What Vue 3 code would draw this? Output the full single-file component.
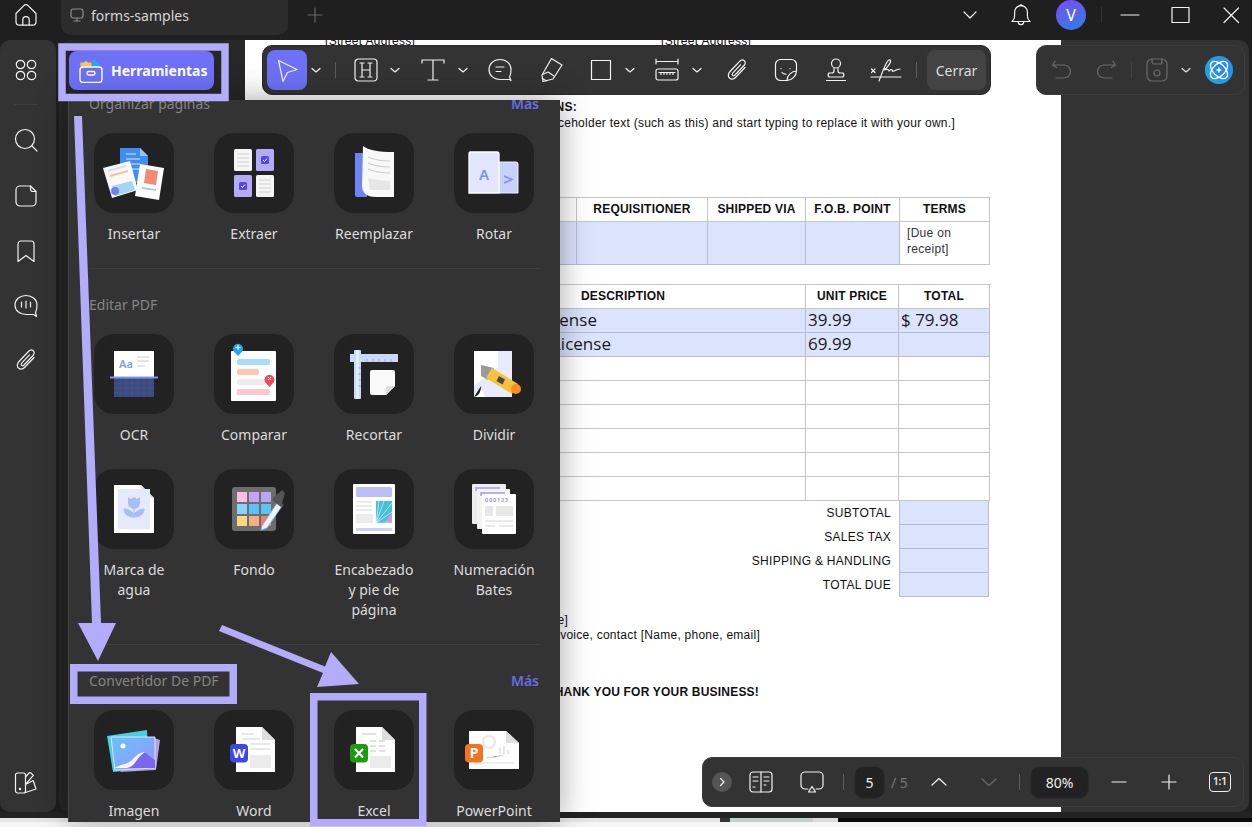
<script setup>
const firstRows = [1, 2, 3, 4, 5, 6]
const totals = ['SUBTOTAL', 'SALES TAX', 'SHIPPING & HANDLING', 'TOTAL DUE']
</script>

<template>
  <div class="app">
    <header class="titlebar">
      <svg class="ic home" viewBox="0 0 24 24"><path d="M2 10.500 9.600 2.800a3.400 3.400 0 0 1 4.800 0L22 10.500v8.300a3.400 3.400 0 0 1-3.400 3.400H5.400A3.400 3.400 0 0 1 2 18.800z" /><path d="M8.800 22v-5.200a3.200 3.200 0 0 1 6.400 0V22" /></svg>
      <div class="tab">
        <svg class="ic dim" viewBox="0 0 14 14"><rect x="1" y="1" width="12" height="9" rx="2.200" /><path d="M7 10v3M4 13h6" /></svg>
        <span>forms-samples</span>
      </div>
      <svg class="ic plus" viewBox="0 0 16 16"><path d="M8 1v14M1 8h14" /></svg>
      <svg class="ic win right-start" viewBox="0 0 20 20"><path d="M4 7l6 6 6-6" /></svg>
      <svg class="ic bell ml29" viewBox="0 0 24 24"><path d="M3 19.500c2-1.500 2.600-3 2.600-5.500V10a6.400 6.400 0 0 1 12.800 0v4c0 2.500.6 4 2.600 5.500z" /><path d="M10.800 3.700a1.300 1.300 0 0 1 2.400 0M9.300 20a2.700 2.700 0 0 0 5.400 0" /></svg>
      <div class="avatar ml23">V</div>
      <span class="vsep tall ml15"></span>
      <svg class="ic win ml18" viewBox="0 0 20 20"><path d="M1 10h18" /></svg>
      <svg class="ic win ml30" viewBox="0 0 20 20"><rect x="2" y="2.500" width="17" height="15" /></svg>
      <svg class="ic win ml31" viewBox="0 0 20 20"><path d="M3 3l14.500 14.500M17.500 3 3 17.500" /></svg>
    </header>

    <div class="workspace">
      <nav class="rail">
        <svg class="ic rail-ic" viewBox="0 0 24 24"><circle cx="6.500" cy="6.500" r="4.200" /><circle cx="17.500" cy="6.500" r="4.200" /><circle cx="6.500" cy="17.500" r="4.200" /><circle cx="17.500" cy="17.500" r="4.200" /></svg>
        <span class="rail-sep"></span>
        <svg class="ic rail-ic" viewBox="0 0 24 24"><circle cx="11" cy="11" r="9.500" /><path d="M18 18l5 5" /></svg>
        <svg class="ic rail-ic gap32" viewBox="0 0 24 24"><path d="M6 2h10.500L22 7.500V18a4 4 0 0 1-4 4H6a4 4 0 0 1-4-4V6a4 4 0 0 1 4-4z" /><path d="M16.500 2v3a2.500 2.500 0 0 0 2.500 2.500h3" /></svg>
        <svg class="ic rail-ic gap31" viewBox="0 0 24 24"><path d="M4 5a3 3 0 0 1 3-3h10a3 3 0 0 1 3 3v17.500l-8-6-8 6z" /></svg>
        <svg class="ic rail-ic gap31" viewBox="0 0 24 24"><path d="M12 1.500C5.600 1.500 1 5.500 1 11s4.600 9.500 11 9.500h7.500l3 2-1-4c1-1.800 1.500-4.500 1.500-7.500 0-5.500-4.600-9.500-11-9.500z" /><path d="M7.500 8v5M12 7v7M16.500 8v5" /></svg>
        <svg class="ic rail-ic gap30" viewBox="0 0 24 24"><path d="M20 9.500 11 19c-2 2.200-4.700 2.500-6.500 1s-1.500-4.300.5-6.500L14.500 3.500c1.500-1.600 3.500-1.800 4.800-.7s1.200 3.100-.3 4.700l-9 9.500c-.8.900-1.900 1-2.500.4s-.4-1.600.4-2.500l7.600-8" /></svg>
        <svg class="ic rail-ic rail-bottom" viewBox="0 0 24 24"><path d="M3.500 3h6a2 2 0 0 1 2 2v16a2 2 0 0 1-2 2h-6a2 2 0 0 1-2-2V5a2 2 0 0 1 2-2z" /><path d="M11.500 7l3-3.500a2 2 0 0 1 2.800-.2l2 2-7.800 9M11.500 22.500l10.500-3.500-2.800-8.500-7.700 4" /><circle cx="6" cy="19" r=".6" /></svg>
      </nav>

      <div class="gutter">
        <button class="tools-btn">
          <svg class="tools-ic" viewBox="0 0 24 24">
            <path d="M1.500 3.500h4l1-2 2.500 2h3.500v4h-11z" fill="#f7c948" />
            <path d="M13 5l4-2 4 3v2h-8z" fill="#2aa4f4" />
            <circle cx="15.500" cy="1.500" r="1.500" fill="#1fbf9c" />
            <rect x="1" y="8" width="22" height="15.500" rx="3" fill="#6e71f7" stroke="#fff" stroke-width="1.400" />
            <rect x="8" y="12.500" width="8" height="3.500" rx="1.700" fill="none" stroke="#fff" stroke-width="1.300" />
          </svg>
          <span>Herramientas</span>
        </button>
      </div>

      <main class="viewer">
        <div class="page">
          <div class="addr"><span>[Street Address]</span><span>[Street Address]</span></div>
          <p class="line bold w-ns">SPECIAL INSTRUCTIONS:</p>
          <p class="line w-ph">[Click a placeholder text (such as this) and start typing to replace it with your own.]</p>

          <div class="grid t1">
            <div class="th">SHIP DATE</div><div class="th">REQUISITIONER</div><div class="th">SHIPPED VIA</div><div class="th">F.O.B. POINT</div><div class="th">TERMS</div>
            <div class="fill"></div><div class="fill"></div><div class="fill"></div><div class="fill"></div><div class="td small">[Due on<br />receipt]</div>
          </div>

          <div class="grid t2">
            <div class="th desc">DESCRIPTION</div><div class="th">UNIT PRICE</div><div class="th">TOTAL</div>
            <div class="fill big lic-a">License</div><div class="fill big">39.99</div><div class="fill big">$ 79.98</div>
            <div class="fill big lic-b">License</div><div class="fill big">69.99</div><div class="fill big"></div>
            <template v-for="row in firstRows" :key="row">
              <div class="td"></div><div class="td"></div><div class="td"></div>
            </template>
          </div>

          <div v-for="label in totals" :key="label" class="total-row">
            <span>{{ label }}</span>
            <div class="total-cell"></div>
          </div>

          <p class="line w-e1">Make all checks payable to [Your Company Name]</p>
          <p class="line w-e2">If you have any questions about this invoice, contact [Name, phone, email]</p>
          <p class="line bold w-thanks">THANK YOU FOR YOUR BUSINESS!</p>
        </div>
        <div class="dark-side"></div>
      </main>

      <div class="annot-bar">
        <button class="cursor-btn">
          <svg class="ic" viewBox="0 0 24 24"><path d="M3.500 2.500 22 11.500l-9.500 3L8 23.500z" /></svg>
        </button>
        <svg class="ic chev ml3" viewBox="0 0 12 12"><path d="M2 4.500l4 3.500 4-3.500" /></svg>
        <span class="vsep ml13"></span>
        <svg class="ic tool ml18" viewBox="0 0 24 24"><rect x="1" y="1" width="22" height="22" rx="3.500" /><path d="M6 5h4M14 5h4M8 5v14M16 5v14M6 19h4M14 19h4M8 12h8" /></svg>
        <svg class="ic chev ml11" viewBox="0 0 12 12"><path d="M2 4.500l4 3.500 4-3.500" /></svg>
        <svg class="ic tool ml20" viewBox="0 0 24 24"><path d="M1 5V2h22v3M12 2v20M7 22h10" /></svg>
        <svg class="ic chev ml12" viewBox="0 0 12 12"><path d="M2 4.500l4 3.500 4-3.500" /></svg>
        <svg class="ic tool ml19" viewBox="0 0 24 24"><path d="M12 1.500C5.600 1.500 1 5.800 1 11.500s4.600 10 11 10h9.500l1.500 1-1.500-3.500c1-1.800 1.500-4.500 1.500-7.500 0-5.700-4.600-10-11-10z" /><path d="M8 9h8M8 13.500h5" /></svg>
        <svg class="ic tool ml28" viewBox="0 0 24 24"><path d="M11.500.5 22 7 13 21l-10 2.500L2 17z" /><path d="M2.500 16.500 8 14l6 4M2.300 20.500l4 2.300" /></svg>
        <svg class="ic tool ml25" viewBox="0 0 24 24"><rect x="2.500" y="2.500" width="19" height="19" /></svg>
        <svg class="ic chev ml11" viewBox="0 0 12 12"><path d="M2 4.500l4 3.500 4-3.500" /></svg>
        <svg class="ic tool ml19" viewBox="0 0 24 24"><path d="M1 1v5M23 1v5M1 3.500h22" /><rect x="1" y="11" width="22" height="11" rx="2" /><path d="M4 14.500h16M6 14.500v2M9 14.500v2M12 14.500v2M15 14.500v2M18 14.500v2" /></svg>
        <svg class="ic chev ml12" viewBox="0 0 12 12"><path d="M2 4.500l4 3.500 4-3.500" /></svg>
        <svg class="ic tool ml22" viewBox="0 0 24 24"><path d="M20 9.500 11 19c-2 2.200-4.700 2.500-6.500 1s-1.500-4.300.5-6.500L14.500 3.500c1.500-1.600 3.500-1.800 4.800-.7s1.200 3.100-.3 4.700l-9 9.500c-.8.900-1.900 1-2.500.4s-.4-1.600.4-2.500l7.600-8" /></svg>
        <svg class="ic tool ml25" viewBox="0 0 24 24"><path d="M6.500 1.500h11a5 5 0 0 1 5 5V13c-5 0-9.500 4.500-9.500 9.500H6.500a5 5 0 0 1-5-5v-11a5 5 0 0 1 5-5z" /><path d="M7 10.500v.2M16 10.500v.2M8 14.500c1 1.300 2.500 1.800 4 1.500M13 22.500c4.500 0 9.500-4.500 9.500-9.500" /></svg>
        <svg class="ic tool ml26" viewBox="0 0 24 24"><circle cx="12" cy="5.500" r="4.500" /><path d="M10 10v3c0 1.500-1 2-2.500 2H5a3 3 0 0 0 0 4h14a3 3 0 0 0 0-4h-2.500C15 15 14 14.500 14 13v-3" /><path d="M2.500 22.500h19" /></svg>
        <svg class="ic sign ml22" viewBox="0 0 32 24"><path d="M1 19h30" /><path d="M1.500 11l3.500 3.500M5 11l-3.500 3.500" /><path d="M9 23c2-5 5-14 8-19 1-2 3-3 3.500-1.500S18 10 13 12c3-1 6-1 6 1 1-1 2-2 3-1s0 2 2 1 4-2 6-2" /></svg>
        <span class="vsep ml14"></span>
        <button class="close-btn ml10">Cerrar</button>
      </div>

      <div class="file-bar">
        <svg class="ic tool off" viewBox="0 0 24 24"><path d="M5 3 2.500 7 6.500 9.500M3 7h11a6.500 6.500 0 0 1 0 13H6" /></svg>
        <svg class="ic tool off ml20" viewBox="0 0 24 24"><path d="M19 3l2.500 4-4 2.500M21 7H10a6.500 6.500 0 0 0 0 13h8" /></svg>
        <span class="vsep faint ml13"></span>
        <svg class="ic tool off ml13" viewBox="0 0 24 24"><rect x="2" y="1" width="20" height="22" rx="5" /><path d="M7 1v3a2 2 0 0 0 2 2h6a2 2 0 0 0 2-2V1" /><circle cx="12" cy="15" r="3" /></svg>
        <svg class="ic chev ml11" viewBox="0 0 12 12"><path d="M2 4.500l4 3.500 4-3.500" /></svg>
        <div class="ai ml13">
          <svg viewBox="0 0 28 28"><g fill="none" stroke="#fff" stroke-width="1.300"><ellipse cx="14" cy="14" rx="10.500" ry="6" transform="rotate(45 14 14)" /><ellipse cx="14" cy="14" rx="10.500" ry="6" transform="rotate(-45 14 14)" /></g><path d="M14 11.500v5M11.500 14h5" stroke="#fff" stroke-width="1.600" /></svg>
        </div>
      </div>

      <div class="page-bar">
        <span class="round-btn"><svg class="ic" viewBox="0 0 12 12"><path d="M4.500 2.500 8 6l-3.500 3.500" /></svg></span>
        <svg class="ic tool ml17" viewBox="0 0 24 24"><rect x="1" y="2" width="22" height="20" rx="3" /><path d="M12 2v20M4 7h5M4 11h5M4 17h2M15 7h5M15 11h5M15 15h2" /></svg>
        <svg class="ic tool ml27" viewBox="0 0 24 24"><path d="M8 19H5a4 4 0 0 1-4-4V6a4 4 0 0 1 4-4h14a4 4 0 0 1 4 4v9a4 4 0 0 1-4 4h-3" /><path d="M12 16.500 15.500 22h-7z" /></svg>
        <span class="vsep ml19"></span>
        <span class="num-box page-num ml10">5</span>
        <span class="of ml6">/ 5</span>
        <svg class="ic arrow ml20" viewBox="0 0 20 20"><path d="M3 13l7-6.500 7 6.500" /></svg>
        <svg class="ic arrow off ml30" viewBox="0 0 20 20"><path d="M3 7l7 6.500L17 7" /></svg>
        <span class="vsep ml20"></span>
        <span class="num-box zoom-num ml10">80%</span>
        <svg class="ic arrow ml20" viewBox="0 0 20 20"><path d="M3 10h14" /></svg>
        <svg class="ic arrow ml30" viewBox="0 0 20 20"><path d="M3 10h14M10 3v14" /></svg>
        <span class="actual ml30">1:1</span>
      </div>
    </div>

    <div class="foot-dark"></div>
    <div class="thumbs">
      <span class="th-a"></span><span class="th-b"></span><span class="th-c"></span><span class="th-d"></span>
    </div>
    <div class="foot-light"></div>

    <aside class="panel">
      <section class="section first">
        <div class="sec-head"><span>Organizar páginas</span><a>Más</a></div>
        <div class="tiles">
          <div class="tile">
            <div class="tile-ic"><svg viewBox="0 0 80 80">
              <path d="M26 15h20l8 8v27H26z" fill="#3f8cf5" /><path d="M46 15l8 8h-8z" fill="#9cc4fb" />
              <path d="M32 21h10M32 26h14M32 31h14M32 36h14" stroke="#a9ccfa" stroke-width="1.500" />
              <path d="M46 31l24 4-5 32-24-4z" fill="#fff" /><path d="M52 36l12 2-2 14-12-2z" fill="#f58a73" /><path d="M48 55l14 2" stroke="#a5d3ee" stroke-width="2" />
              <path d="M9 35l27-7 8 29-26 8z" fill="#f8f8f6" /><path d="M14 38l18-5" stroke="#cfe4ef" stroke-width="2" /><path d="M16 43l18-5" stroke="#f6c49b" stroke-width="2" />
              <path d="M18 53l20-5 3 9-20 6z" fill="#a4d4f6" /><circle cx="21" cy="58" r="4" fill="#6f81ea" />
            </svg></div>
            <span class="name">Insertar</span>
          </div>
          <div class="tile">
            <div class="tile-ic"><svg viewBox="0 0 80 80">
              <rect x="20" y="16" width="18" height="22" rx="1.500" fill="#f5f5f5" /><path d="M23 21h12M23 25h12M23 29h12M23 33h12" stroke="#ddd" stroke-width="1.300" />
              <rect x="42" y="16" width="18" height="22" rx="1.500" fill="#b5acf9" /><rect x="47" y="23" width="8" height="8" rx="1.500" fill="#5a45e6" /><path d="M49 27l1.500 1.500 2.500-3" stroke="#fff" fill="none" />
              <rect x="20" y="42" width="18" height="22" rx="1.500" fill="#b5acf9" /><rect x="25" y="49" width="8" height="8" rx="1.500" fill="#5a45e6" /><path d="M27 53l1.500 1.500 2.500-3" stroke="#fff" fill="none" />
              <rect x="42" y="42" width="18" height="22" rx="1.500" fill="#f5f5f5" /><path d="M45 47h12M45 51h12M45 55h12M45 59h12" stroke="#ddd" stroke-width="1.300" />
            </svg></div>
            <span class="name">Extraer</span>
          </div>
          <div class="tile">
            <div class="tile-ic"><svg viewBox="0 0 80 80">
              <path d="M21 20h12v44H23a2 2 0 0 1-2-2z" fill="#6f83f2" />
              <path d="M29 13c6 4 14 6 31 6v45H42c-8 0-13-3-14-10z" fill="#f8f8f8" />
              <path d="M34 24c7 3 13 4 22 4M34 30c7 3 13 4 22 4M34 36c7 3 13 4 22 4" stroke="#ccc" stroke-width="1.200" fill="none" />
              <path d="M34 45c7 2 13 2 22 3v9H36z" fill="#e6e6e6" />
            </svg></div>
            <span class="name">Reemplazar</span>
          </div>
          <div class="tile">
            <div class="tile-ic"><svg viewBox="0 0 80 80">
              <path d="M45 29h17a2 2 0 0 1 2 2v29H45z" fill="#c7d1fb" stroke="#eef" />
              <path d="M16 19h27a2 2 0 0 1 2 2v39H15V20z" fill="#e2e7fd" stroke="#fff" stroke-width="1.300" />
              <text x="30" y="47" class="art" font-size="15" fill="#7d90f0" text-anchor="middle">A</text>
              <path d="M50 43l8 3.500-8 3.500" stroke="#7d90f0" stroke-width="1.500" fill="none" />
            </svg></div>
            <span class="name">Rotar</span>
          </div>
        </div>
      </section>

      <section class="section">
        <div class="sec-head"><span>Editar PDF</span></div>
        <div class="tiles">
          <div class="tile">
            <div class="tile-ic"><svg viewBox="0 0 80 80">
              <rect x="20" y="17" width="40" height="26" fill="#fff" />
              <text x="32" y="34" class="art" font-size="11" fill="#80a0ee" text-anchor="middle">Aa</text>
              <path d="M43 23h12M43 27h12M43 32h8" stroke="#ddd" stroke-width="1.300" />
              <rect x="20" y="44" width="40" height="19" fill="#3b4b7f" />
              <path d="M20 49h40M20 54h40M20 59h40M26 44v19M32 44v19M38 44v19M44 44v19M50 44v19M56 44v19" stroke="#4b5c92" stroke-width=".6" />
              <rect x="16" y="42.500" width="48" height="2" fill="#7f98ee" />
            </svg></div>
            <span class="name">OCR</span>
          </div>
          <div class="tile">
            <div class="tile-ic"><svg viewBox="0 0 80 80">
              <rect x="17" y="17" width="45" height="50" rx="1" fill="#fff" />
              <rect x="23" y="25" width="33" height="6" rx="2" fill="#a8dcfb" /><rect x="23" y="35" width="22" height="6" rx="2" fill="#fbc9ae" /><rect x="23" y="45" width="28" height="6" rx="2" fill="#ececec" /><rect x="23" y="55" width="33" height="6" rx="2" fill="#fbc6d0" />
              <path d="M19.500 17a5 5 0 1 1 9 0l-4.500 5z" fill="#1ea7ea" /><path d="M24 11v5M21.500 13.500h5" stroke="#fff" />
              <path d="M51 48a5 5 0 1 1 9 0l-4.500 5z" fill="#ef4b5c" /><path d="M54 43l3 3M57 43l-3 3" stroke="#fff" />
            </svg></div>
            <span class="name">Comparar</span>
          </div>
          <div class="tile">
            <div class="tile-ic"><svg viewBox="0 0 80 80">
              <rect x="20" y="16" width="7" height="49" rx="1" fill="#c9d9f8" /><rect x="16" y="20" width="48" height="8" fill="#c9d9f8" />
              <rect x="22" y="16" width="3" height="49" fill="#e4ecfc" />
              <path d="M33 25v3M39 25v3M45 25v3M51 25v3M57 25v3M24 34h3M24 40h3M24 46h3M24 52h3" stroke="#8aa4d8" stroke-width=".8" />
              <path d="M38 36h21a2 2 0 0 1 2 2v14l-9 9H38a2 2 0 0 1-2-2V38a2 2 0 0 1 2-2z" fill="#fafafa" /><path d="M61 52h-7a2 2 0 0 0-2 2v7z" fill="#ddd" />
            </svg></div>
            <span class="name">Recortar</span>
          </div>
          <div class="tile">
            <div class="tile-ic"><svg viewBox="0 0 80 80">
              <path d="M20 17h38v46H30l-3-11-7 11z" fill="#e8ebfb" /><path d="M20 17h24v16L27 46l-7 6z" fill="#fff" />
              <path d="M20 63c4-1 7-4 7-11l4 11z" fill="#fff" />
              <path d="M27 31l13 3-6 12-7-4z" fill="#9a9a9a" />
              <path d="M38 34l26 16-6 10-26-16z" fill="#f5c23d" />
              <circle cx="62" cy="55" r="5" fill="#f78e1e" />
              <path d="M45 42l6 3.500-2.500 5-6-3.500z" fill="#4a4a4a" />
            </svg></div>
            <span class="name">Dividir</span>
          </div>

          <div class="tile">
            <div class="tile-ic"><svg viewBox="0 0 80 80">
              <path d="M20 16h27l13 13v35H20z" fill="#fff" /><path d="M47 16l13 13H47z" fill="#e2e2e2" />
              <rect x="24" y="20" width="32" height="40" fill="#e5e9fc" />
              <path d="M34 28l3 2 3-2 3 2 3-2v6a6 6 0 0 1-12 0z" fill="#a6bef8" /><path d="M40 40v8M30 40c0 5 4 8 10 8 6 0 10-3 10-8-4 0-7 2-10 5-3-3-6-5-10-5z" fill="#a6bef8" stroke="#a6bef8" />
            </svg></div>
            <span class="name">Marca de agua</span>
          </div>
          <div class="tile">
            <div class="tile-ic"><svg viewBox="0 0 80 80">
              <rect x="18" y="18" width="44" height="44" rx="3" fill="#6d6d6d" />
              <rect x="23" y="23" width="10" height="10" fill="#f7c0e2" /><rect x="35" y="23" width="10" height="10" fill="#c5a4f8" /><rect x="47" y="23" width="10" height="10" fill="#b7a8f4" />
              <rect x="23" y="35" width="10" height="10" fill="#88d2fb" /><rect x="35" y="35" width="10" height="10" fill="#5cc1f8" /><rect x="47" y="35" width="10" height="10" fill="#58c6ef" />
              <rect x="23" y="47" width="10" height="10" fill="#fbd780" /><rect x="35" y="47" width="10" height="10" fill="#f9ae82" /><rect x="47" y="47" width="10" height="10" fill="#ee7e66" />
              <path d="M48 57l15-23 5 3-15 22-6 2z" fill="#eef3ff" stroke="#8ab4f5" />
              <path d="M60 28l8-7 3 3-3 10 2 2-3 2-9-7z" fill="#555" />
            </svg></div>
            <span class="name">Fondo</span>
          </div>
          <div class="tile">
            <div class="tile-ic"><svg viewBox="0 0 80 80">
              <rect x="19" y="15" width="42" height="50" rx="1" fill="#fff" />
              <rect x="22" y="18" width="36" height="10" rx="1.500" fill="#bdbdf8" />
              <path d="M22 33h16M22 37h16M22 41h16" stroke="#e3e3e3" stroke-width="1.600" />
              <rect x="22" y="45" width="17" height="9" fill="#ebebeb" />
              <rect x="42" y="32" width="16" height="22" fill="#47bfd8" /><path d="M50 54 58 44v10z" fill="#c5a0e8" />
              <path d="M42 54l3-22M42 54l8-22M42 54l16-20M42 54l16-11M42 54h16" stroke="#d9f6fb" stroke-width=".7" />
              <rect x="22" y="59" width="36" height="3" fill="#cfcff8" />
            </svg></div>
            <span class="name">Encabezado y pie de página</span>
          </div>
          <div class="tile">
            <div class="tile-ic"><svg viewBox="0 0 80 80">
              <rect x="18" y="15" width="34" height="40" rx="1" fill="#ededed" /><rect x="21" y="18" width="25" height="4" fill="#b6aef8" />
              <rect x="23" y="20" width="33" height="40" rx="1" fill="#f3f3f3" /><rect x="26" y="23" width="25" height="4" fill="#b6aef8" />
              <rect x="28" y="25" width="34" height="40" rx="1" fill="#fff" />
              <text x="31" y="33" class="art" font-size="5.500" fill="#8f84ee" textLength="23">000123</text>
              <rect x="31" y="37" width="8" height="10" fill="#e8e8e8" /><rect x="42" y="37" width="17" height="10" fill="#e8e8e8" />
              <path d="M31 52h28M31 57h10M45 57h14" stroke="#e3e3e3" stroke-width="1.500" />
            </svg></div>
            <span class="name">Numeración Bates</span>
          </div>
        </div>
      </section>

      <section class="section last">
        <div class="sec-head"><span>Convertidor De PDF</span><a>Más</a></div>
        <div class="tiles">
          <div class="tile">
            <div class="tile-ic"><svg viewBox="0 0 80 80">
              <path d="M13 26l40-6 2 38-36 4z" fill="#46d0e0" />
              <path d="M60 28l6 2-4 30-36 2z" fill="#b59fe8" />
              <defs><linearGradient id="imgfill" x1="0" y1="0" x2="1" y2="1"><stop offset="0" stop-color="#68c2fb" /><stop offset="1" stop-color="#9a94f8" /></linearGradient></defs>
              <path d="M17 27h44v31l-40 2z" fill="url(#imgfill)" stroke="#d9e3ff" stroke-width="1" />
              <circle cx="29" cy="36" r="2.500" fill="#fff" />
              <path d="M20 58c8-4 12-3 18-8 5-6 10-8 13-8l10 8v8z" fill="#fff" opacity=".9" />
              <path d="M33 58c8-1 9-10 18-16l10 8v8z" fill="#7a66f0" />
            </svg></div>
            <span class="name">Imagen</span>
          </div>
          <div class="tile">
            <div class="tile-ic"><svg viewBox="0 0 80 80">
              <path d="M22 17h26l13 13v32H22z" fill="#fff" /><path d="M48 17l13 13H48z" fill="#dedede" />
              <path d="M28 24h12M28 29h18M36 34h20M36 39h20" stroke="#e2e2e2" stroke-width="1.500" /><rect x="36" y="45" width="21" height="13" fill="#ececec" />
              <rect x="16" y="34" width="18" height="18.500" rx="4" fill="#3d47e8" />
              <text x="25" y="48" class="art badge" font-size="13" text-anchor="middle">W</text>
            </svg></div>
            <span class="name">Word</span>
          </div>
          <div class="tile">
            <div class="tile-ic"><svg viewBox="0 0 80 80">
              <path d="M22 17h26l13 13v32H22z" fill="#fff" /><path d="M48 17l13 13H48z" fill="#dedede" />
              <path d="M28 24h14M36 31h6M45 31h6M36 36h6M45 36h6M36 41h6M45 41h6" stroke="#e2e2e2" stroke-width="2" /><rect x="36" y="46" width="21" height="12" fill="#ececec" />
              <rect x="16" y="34" width="18" height="18.500" rx="4" fill="#1f9a0f" />
              <path d="M21 39l8 8.500M29 39l-8 8.500" stroke="#fff" stroke-width="2.200" />
            </svg></div>
            <span class="name">Excel</span>
          </div>
          <div class="tile">
            <div class="tile-ic"><svg viewBox="0 0 80 80">
              <path d="M15 21h37l13 12v26H15z" fill="#fff" /><path d="M52 21l13 12H52z" fill="#dedede" />
              <circle cx="35" cy="32" r="6" fill="none" stroke="#eaeaea" stroke-width="2.500" /><path d="M46 38v6M50 36v8M54 40v4" stroke="#e0e0e0" stroke-width="1.500" /><path d="M32 48l10-1 8-2M20 53h40" stroke="#e0e0e0" stroke-width="1" />
              <rect x="11" y="34" width="18" height="18.500" rx="4" fill="#f5731f" />
              <text x="20" y="48" class="art badge" font-size="14" text-anchor="middle">P</text>
            </svg></div>
            <span class="name">PowerPoint</span>
          </div>
        </div>
      </section>
    </aside>

    <svg class="marks" viewBox="0 0 1252 827">
      <g fill="none" stroke="#b5abfb" stroke-width="7.500">
        <rect x="62" y="47" width="163" height="50.500" />
        <rect x="73.750" y="667.750" width="159.500" height="32.500" />
        <rect x="313.750" y="696.750" width="109" height="126" />
      </g>
      <g fill="#b5abfb">
        <path d="M74 116h8l19 507h15l-18 38-20-38h14z" />
        <path d="M222 625 325 666.500 331 652 359 684 317 687 323 673 219 631z" />
      </g>
    </svg>
  </div>
</template>

<style>
html, body {
  margin: 0;
  background: #1f1f1f;
}
</style>

<style scoped>
.app {
  position: relative;
  width: 1252px;
  height: 827px;
  overflow: hidden;
  background: #1f1f1f;
  font-family: "Noto Sans", "Open Sans", sans-serif;
  color: #ddd;
}

.ml3 { margin-left: 3px; }
.ml6 { margin-left: 6px; }
.ml10 { margin-left: 10px; }
.ml11 { margin-left: 11px; }
.ml12 { margin-left: 12px; }
.ml13 { margin-left: 13px; }
.ml14 { margin-left: 14px; }
.ml15 { margin-left: 15px; }
.ml17 { margin-left: 17px; }
.ml18 { margin-left: 18px; }
.ml19 { margin-left: 19px; }
.ml20 { margin-left: 20px; }
.ml22 { margin-left: 22px; }
.ml23 { margin-left: 23px; }
.ml25 { margin-left: 25px; }
.ml26 { margin-left: 26px; }
.ml27 { margin-left: 27px; }
.ml28 { margin-left: 28px; }
.ml29 { margin-left: 29px; }
.ml30 { margin-left: 30px; }
.ml31 { margin-left: 31px; }

.ic {
  display: block;
  flex: none;
  fill: none;
  stroke: currentColor;
  stroke-width: 1.200;
  stroke-linecap: round;
  stroke-linejoin: round;
  color: #f2f2f2;
}

.titlebar {
  height: 40px;
  display: flex;
  align-items: center;
  padding-left: 14px;
  box-sizing: border-box;
}
.home { width: 24px; height: 24px; margin-top: -10px; }
.tab {
  width: 227px;
  height: 35px;
  margin-left: 23px;
  margin-top: -5px;
  box-sizing: border-box;
  padding: 0 0 5px 9px;
  display: flex;
  align-items: center;
  gap: 7px;
  background: #2c2c2c;
  border-radius: 0 0 10px 10px;
  font-size: 14px;
  color: #d6d6d6;
}
.tab .ic { width: 14px; height: 14px; }
.dim { color: #8c8c8c; }
.plus { width: 16px; height: 16px; margin-left: 19px; margin-top: -10px; color: #666; }
.win { width: 20px; height: 20px; margin-top: -10px; }
.right-start { margin-left: auto; margin-right: 0; }
.bell { width: 24px; height: 24px; margin-top: -12px; }
.avatar {
  width: 30px;
  height: 30px;
  margin-top: -10px;
  border-radius: 50%;
  background: linear-gradient(160deg, #7a4ff0, #2f7de8);
  font-size: 16px;
  line-height: 30px;
  text-align: center;
  color: #fff;
  flex: none;
}
.titlebar > :last-child { margin-right: 11px; }

.vsep {
  flex: none;
  width: 1px;
  height: 16px;
  background: #5c5c5c;
}
.vsep.tall { height: 16px; margin-top: -10px; background: #333; }
.vsep.faint { background: #444; }

.workspace {
  position: relative;
  height: 772px;
  display: flex;
}
.rail {
  width: 56px;
  flex: none;
  background: #333;
  border-radius: 10px;
  display: flex;
  flex-direction: column;
  align-items: center;
  padding: 18px 4px 18px 0;
  box-sizing: border-box;
}
.rail-ic { width: 24px; height: 24px; }
.rail-sep {
  width: 24px;
  height: 1px;
  margin: 22px 0 23px;
  background: #3e3e3e;
}
.gap32 { margin-top: 32px; }
.gap31 { margin-top: 31px; }
.gap30 { margin-top: 30px; }
.rail-bottom { margin-top: auto; }

.gutter {
  width: 186px;
  flex: none;
  margin-left: 3px;
  background: #272727;
  border-radius: 10px 0 0 10px;
  padding: 11px 0 0 10px;
  box-sizing: border-box;
}
.tools-btn {
  width: 145px;
  height: 39px;
  padding: 0 0 0 10px;
  display: flex;
  align-items: center;
  gap: 8px;
  border: 0;
  border-radius: 8px;
  background: #6e71f7;
  color: #fff;
  font: 700 14px "Noto Sans", sans-serif;
}
.tools-ic { width: 24px; height: 24px; flex: none; }

.viewer {
  flex: 1;
  display: flex;
  min-width: 0;
}
.page {
  width: 816px;
  flex: none;
  background: #fff;
  overflow: hidden;
  font-family: "Liberation Sans", Arial, sans-serif;
  font-size: 12px;
  color: #111;
}
.dark-side {
  flex: 1;
  margin-right: 3px;
  background: #333;
  border-radius: 0 10px 10px 0;
}
.addr {
  display: flex;
  gap: 240px;
  margin-top: -6px;
  padding-left: 80px;
  line-height: 14px;
  letter-spacing: .3px;
}
.addr span { width: 96px; white-space: nowrap; }
.line {
  margin: 0;
  line-height: 16px;
  letter-spacing: .26px;
  text-align: right;
  white-space: nowrap;
}
.bold { font-weight: 700; }
.w-ns { width: 332px; margin-top: 51px; }
.w-ph { width: 710px; }
.grid {
  display: grid;
  margin-left: 165px;
  width: 581px;
  border-top: 1px solid #c6c6c6;
  border-left: 1px solid #c6c6c6;
  box-sizing: border-box;
}
.t1 {
  margin-top: 66px;
  grid-template-columns: 166px 131px 98px 94px 90px;
  grid-template-rows: 24px 43px;
}
.t2 {
  margin-top: 19px;
  grid-template-columns: 395px 93px 91px;
  grid-auto-rows: 24px;
}
.th, .td, .fill {
  border-right: 1px solid #c6c6c6;
  border-bottom: 1px solid #c6c6c6;
  box-sizing: border-box;
}
.th {
  font-weight: 700;
  line-height: 23px;
  text-align: center;
  letter-spacing: .2px;
}
.desc { padding-left: 30px; }
.fill {
  background: #dbe3fd;
  border-color: #b4bcd8;
}
.small {
  padding: 4px 7px;
  line-height: 15.500px;
  font-size: 12px;
  letter-spacing: .3px;
  color: #333;
}
.big {
  font-family: "Open Sans", "Noto Sans", sans-serif;
  font-size: 17px;
  line-height: 22px;
  padding-left: 2px;
  color: #1a1a1a;
}
.lic-a { padding-left: 127px; }
.lic-b { padding-left: 141px; }
.total-row {
  display: flex;
  justify-content: flex-end;
  width: 744px;
  height: 24px;
  line-height: 24px;
  letter-spacing: .27px;
}
.total-row span { margin-right: 8px; }
.total-cell {
  width: 90px;
  box-sizing: border-box;
  background: #dbe3fd;
  border: 1px solid #b4bcd8;
  border-top: 0;
  flex: none;
}
.w-e1 { width: 323px; margin-top: 16px; line-height: 15px; }
.w-e2 { width: 515px; line-height: 15px; }
.w-thanks { width: 514px; margin-top: 41px; letter-spacing: .2px; }

.annot-bar, .file-bar, .page-bar {
  position: absolute;
  display: flex;
  align-items: center;
  box-sizing: border-box;
  background: #333;
  border-radius: 10px;
}
.annot-bar {
  left: 262px;
  top: 5px;
  width: 729px;
  height: 50px;
  padding-left: 4px;
  border: 1px solid #2a2a2a;
}
.cursor-btn {
  width: 40px;
  height: 40px;
  flex: none;
  padding: 8px;
  border: 0;
  border-radius: 8px;
  background: #6e71f7;
}
.cursor-btn .ic { width: 24px; height: 24px; }
.chev { width: 12px; height: 12px; }
.tool { width: 24px; height: 24px; }
.sign { width: 32px; height: 24px; }
.close-btn {
  width: 59px;
  height: 40px;
  flex: none;
  padding: 0;
  border: 0;
  border-radius: 8px;
  background: #444;
  color: #ddd;
  font: 14px "Noto Sans", sans-serif;
}
.file-bar {
  left: 1036px;
  top: 5px;
  width: 209px;
  height: 50px;
  padding-left: 13px;
  border: 1px solid #3d3d3d;
}
.off { color: #6a6a6a; }
.file-bar .chev { color: #ddd; }
.ai {
  width: 28px;
  height: 28px;
  border-radius: 50%;
  background: radial-gradient(circle at 60% 45%, #2e7cf0, #1fa4ea 70%);
  flex: none;
}
.ai svg { display: block; width: 28px; height: 28px; }

.page-bar {
  left: 702px;
  top: 717px;
  width: 542px;
  height: 50px;
  padding-left: 9px;
  border: 1px solid #3d3d3d;
}
.round-btn {
  width: 20px;
  height: 20px;
  flex: none;
  padding: 4px;
  box-sizing: border-box;
  border-radius: 50%;
  background: #555;
}
.round-btn .ic { width: 12px; height: 12px; }
.arrow { width: 20px; height: 20px; }
.num-box {
  height: 33px;
  flex: none;
  box-sizing: border-box;
  border: 1px solid #2e2e2e;
  border-radius: 10px;
  background: #222;
  line-height: 32px;
  text-align: center;
  font-size: 14px;
  color: #eee;
}
.page-num { width: 31px; }
.zoom-num { width: 59px; }
.of {
  width: 18px;
  flex: none;
  font-size: 14px;
  color: #777;
}
.actual {
  width: 22px;
  height: 20px;
  flex: none;
  box-sizing: border-box;
  border: 1.300px solid #eee;
  border-radius: 4px;
  font-size: 10px;
  font-weight: 600;
  line-height: 17px;
  text-align: center;
  color: #eee;
}

.foot-dark { height: 6px; background: #232323; }
.thumbs {
  height: 4px;
  display: flex;
  background: #0a0a0a;
}
.thumbs span { display: block; height: 4px; }
.th-a { width: 720px; background: #e6e6e6; }
.th-b { width: 10px; background: #333; }
.th-c { width: 83px; background: #bcd4cc; }
.th-d { width: 25px; background: #dcdcdc; }
.foot-light { height: 5px; background: #f6f6f6; }

.panel {
  position: absolute;
  left: 68px;
  top: 100px;
  width: 492px;
  height: 722px;
  box-sizing: border-box;
  overflow: hidden;
  background: #333;
  border-left: 1px solid #454545;
  box-shadow: 0 0 30px rgba(0, 0, 0, .35);
}
.section {
  margin: 0 21px 0 20px;
  padding: 26px 0 24px;
  border-bottom: 1px solid #3f3f3f;
}
.section.first { padding-top: 0; margin-top: -6px; }
.section.last { border-bottom: 0; }
.sec-head {
  display: flex;
  justify-content: space-between;
  height: 20px;
  font-size: 14px;
  line-height: 20px;
  color: #858585;
}
.sec-head a { color: #6a6de0; font-weight: 600; }
.tiles {
  display: grid;
  grid-template-columns: repeat(4, 120px);
  row-gap: 24px;
  margin: 19px 0 0 -15px;
}
.tile {
  display: flex;
  flex-direction: column;
  align-items: center;
}
.tile-ic {
  width: 80px;
  height: 80px;
  border-radius: 20px;
  background: #222;
}
.tile-ic svg { display: block; width: 80px; height: 80px; }
.name {
  width: 88px;
  margin-top: 11px;
  font-size: 14px;
  line-height: 20px;
  text-align: center;
  color: #dcdcdc;
}
.art { font-family: "Noto Sans", sans-serif; font-weight: 600; }
.badge { fill: #fff; font-weight: 700; }

.marks {
  position: absolute;
  left: 0;
  top: 0;
  width: 1252px;
  height: 827px;
  pointer-events: none;
}
</style>
